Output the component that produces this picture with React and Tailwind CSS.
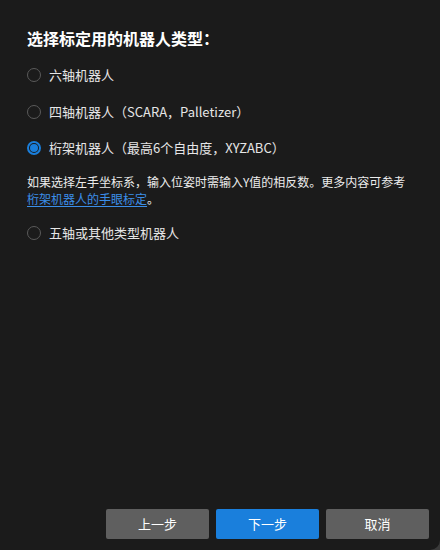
import React, { useState } from "react";

const options = [
  { id: "six", label: "六轴机器人" },
  { id: "four", label: "四轴机器人（SCARA，Palletizer）" },
  { id: "gantry", label: "桁架机器人（最高6个自由度，XYZABC）" },
  { id: "five", label: "五轴或其他类型机器人" },
];

const Radio = ({ checked }) => (
  <span
    className={`flex items-center justify-center w-[14px] h-[14px] rounded-full border ${
      checked ? "border-[#1a7fdc] border-2" : "border-[#5a5a5a]"
    }`}
  >
    {checked && <span className="w-[6px] h-[6px] rounded-full bg-[#1a7fdc] ring-1 ring-[#1a7fdc]" />}
  </span>
);

const Option = ({ opt, selected, onSelect, className }) => (
  <label
    onClick={() => onSelect(opt.id)}
    className={`flex items-center h-5 gap-[8px] cursor-pointer text-[13px] text-[#e6e6e6] ${className}`}
  >
    <Radio checked={selected === opt.id} />
    <span>{opt.label}</span>
  </label>
);

export default function App() {
  const [selected, setSelected] = useState("gantry");

  return (
    <div className="w-[440px] h-[550px] bg-[#3a3a3a]" style={{ fontFamily: '"Noto Sans CJK SC", "Noto Sans", sans-serif' }}>
      <div className="flex flex-col h-full bg-[#1b1b1b] rounded-br-[10px]">
        <div className="flex flex-col pl-[27px] pt-[26px]">
          <h1 className="text-[16px] leading-6 font-bold text-white">选择标定用的机器人类型：</h1>

          <Option opt={options[0]} selected={selected} onSelect={setSelected} className="mt-[15px]" />
          <Option opt={options[1]} selected={selected} onSelect={setSelected} className="mt-[17px]" />
          <Option opt={options[2]} selected={selected} onSelect={setSelected} className="mt-[16px]" />

          {selected === "gantry" && (
            <p className="mt-[15px] text-[12px] leading-[17px] text-[#ececec]">
              如果选择左手坐标系，输入位姿时需输入Y值的相反数。更多内容可参考
              <br />
              <a href="#" className="text-[#3b8ee8] underline underline-offset-2">
                桁架机器人的手眼标定
              </a>
              。
            </p>
          )}

          <Option opt={options[3]} selected={selected} onSelect={setSelected} className="mt-[16px]" />
        </div>

        <div className="flex-1" />

        {/* 底部按钮 */}
        <div className="flex justify-end gap-[7px] pr-[11px] pb-[11px]">
          <button className="w-[103px] h-[30px] rounded-[2px] bg-[#5f5f5f] text-[13px] text-white">上一步</button>
          <button className="w-[103px] h-[30px] rounded-[2px] bg-[#1a7fdc] text-[13px] text-white">下一步</button>
          <button className="w-[103px] h-[30px] rounded-[2px] bg-[#5f5f5f] text-[13px] text-white">取消</button>
        </div>
      </div>
    </div>
  );
}
